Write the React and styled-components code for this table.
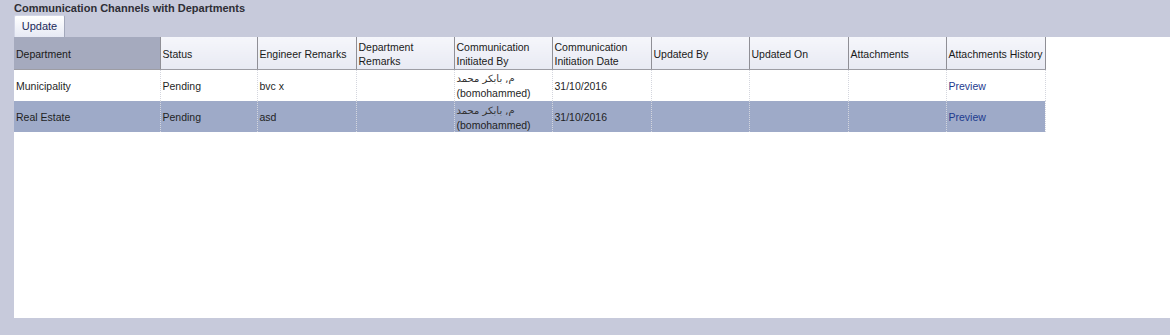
import React from "react";
import styled, { createGlobalStyle } from "styled-components";

const Global = createGlobalStyle`
  html, body { margin: 0; padding: 0; }
  body {
    background: #c7cadb;
    font-family: "Liberation Sans", Arial, sans-serif;
    font-size: 11px;
    color: #1a1a1a;
  }
`;

const Page = styled.div`
  width: 1170px;
  height: 335px;
  padding-left: 14px;
  box-sizing: border-box;
  display: flex;
  flex-direction: column;
`;

const Title = styled.div`
  font-family: "Liberation Sans", Arial, sans-serif;
  font-weight: bold;
  font-size: 11px;
  line-height: 14px;
  height: 15px;
  color: #2e2e35;
  padding-top: 1px;
  box-sizing: border-box;
`;

const Toolbar = styled.div`
  display: flex;
  height: 22px;
`;

const Button = styled.button`
  font-family: "Liberation Sans", Arial, sans-serif;
  font-size: 11px;
  color: #1c2a5a;
  width: 51px;
  height: 22px;
  padding: 0 0 1px 0;
  border: 1px solid #a3a8bb;
  border-bottom: none;
  border-left-color: #d3d6e6;
  border-top-color: #d3d6e6;
  border-radius: 2px 2px 0 0;
  background: linear-gradient(#ffffff, #e6e9f4);
  cursor: pointer;
`;

const Panel = styled.div`
  background: #ffffff;
  height: 281px;
  flex: none;
`;

const Table = styled.table`
  border-collapse: collapse;
  table-layout: fixed;
  font-family: "Liberation Sans", Arial, "DejaVu Sans", sans-serif;
  font-size: 10.5px;
`;

const Th = styled.th`
  font-weight: normal;
  text-align: left;
  vertical-align: middle;
  height: 32px;
  padding: 3px 2px 0 2px;
  line-height: 14px;
  color: #1a1a1a;
  white-space: ${(p) => (p.$nowrap ? "nowrap" : "normal")};
  overflow: hidden;
  background: ${(p) =>
    p.$sorted ? "#a5aabe" : "linear-gradient(#f5f6fb, #e8eaf3)"};
  border-right: 1px solid #8f8f96;
  border-bottom: 1px solid #9d9da4;
  box-sizing: border-box;
`;

const Tr = styled.tr`
  background: ${(p) => (p.$selected ? "#9eaac8" : "#ffffff")};
`;

const Td = styled.td`
  height: ${(p) => p.$h}px;
  padding: 1px 2px 0 2px;
  vertical-align: middle;
  line-height: 14px;
  border-right: 1px dotted #d4d6de;
  color: #1f1f1f;
  box-sizing: border-box;
`;

const Arabic = styled.span`
  font-family: "DejaVu Sans", "Noto Sans", sans-serif;
  font-size: 10px;
  color: #333;
`;

const Link = styled.a`
  color: #1c3a8e;
  text-decoration: none;
`;

const columns = [
  { label: "Department", w: 146, sorted: true },
  { label: "Status", w: 97 },
  { label: "Engineer Remarks", w: 99, nowrap: true },
  { label: "Department Remarks", w: 98 },
  { label: "Communication Initiated By", w: 98 },
  { label: "Communication Initiation Date", w: 99 },
  { label: "Updated By", w: 98 },
  { label: "Updated On", w: 99 },
  { label: "Attachments", w: 98 },
  { label: "Attachments History", w: 99, nowrap: true },
];

const rows = [
  { dept: "Municipality", status: "Pending", remarks: "bvc x", date: "31/10/2016", h: 32 },
  { dept: "Real Estate", status: "Pending", remarks: "asd", date: "31/10/2016", h: 31, selected: true },
];

export default function App() {
  return (
    <>
      <Global />
      <Page>
        <Title>Communication Channels with Departments</Title>
        <Toolbar>
          <Button>Update</Button>
        </Toolbar>
        <Panel>
          <Table>
            <colgroup>
              {columns.map((c) => (
                <col key={c.label} style={{ width: c.w }} />
              ))}
            </colgroup>
            <thead>
              <tr>
                {columns.map((c) => (
                  <Th key={c.label} $sorted={c.sorted} $nowrap={c.nowrap}>
                    {c.label}
                  </Th>
                ))}
              </tr>
            </thead>
            <tbody>
              {rows.map((r) => (
                <Tr key={r.dept} $selected={r.selected}>
                  <Td $h={r.h}>{r.dept}</Td>
                  <Td $h={r.h}>{r.status}</Td>
                  <Td $h={r.h}>{r.remarks}</Td>
                  <Td $h={r.h}></Td>
                  <Td $h={r.h}>
                    <Arabic>م, بابكر محمد</Arabic>
                    <br />
                    (bomohammed)
                  </Td>
                  <Td $h={r.h}>{r.date}</Td>
                  <Td $h={r.h}></Td>
                  <Td $h={r.h}></Td>
                  <Td $h={r.h}></Td>
                  <Td $h={r.h}>
                    <Link href="#">Preview</Link>
                  </Td>
                </Tr>
              ))}
            </tbody>
          </Table>
        </Panel>
      </Page>
    </>
  );
}
